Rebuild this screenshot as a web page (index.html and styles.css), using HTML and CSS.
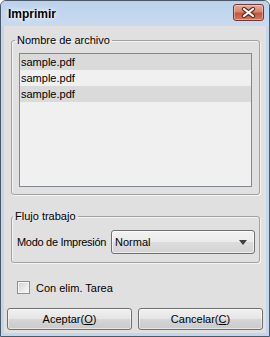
FILE: index.html
```html
<!DOCTYPE html>
<html lang="es">
<head>
    <meta charset="UTF-8">
    <title>Imprimir</title>
    <link rel="stylesheet" href="styles.css">
</head>
<body>

<div class="ventana">
    <!-- Barra de título -->
    <div class="titulo">
        <span class="titulo-texto">Imprimir</span>
        <button class="cerrar" aria-label="Cerrar">
            <svg width="15" height="11" viewBox="0 0 15 11">
                <path d="M3 2 L12 9 M12 2 L3 9" stroke="#5a2a22" stroke-width="4.2" stroke-linecap="round"/>
                <path d="M3 2 L12 9 M12 2 L3 9" stroke="#ffffff" stroke-width="2.2" stroke-linecap="round"/>
            </svg>
        </button>
    </div>

    <div class="contenido">
        <!-- Lista de archivos -->
        <fieldset class="grupo grupo-archivos">
            <legend>Nombre de archivo</legend>
            <div class="lista">
                <div class="fila oscura">sample.pdf</div>
                <div class="fila">sample.pdf</div>
                <div class="fila oscura">sample.pdf</div>
            </div>
        </fieldset>

        <!-- Flujo de trabajo -->
        <fieldset class="grupo grupo-flujo">
            <legend>Flujo trabajo</legend>
            <div class="fila-modo">
                <label for="modo" class="etiqueta-modo">Modo de Impresión</label>
                <div class="combo" id="modo">
                    <span>Normal</span>
                    <span class="flecha"></span>
                </div>
            </div>
        </fieldset>

        <label class="opcion">
            <span class="casilla"></span>
            Con elim. Tarea
        </label>

        <div class="botones">
            <button class="boton">Aceptar(<u>O</u>)</button>
            <button class="boton">Cancelar(<u>C</u>)</button>
        </div>
    </div>
</div>

</body>
</html>
```

FILE: styles.css
```css
/* Dialogo estilo Windows 7 basico */
:root {
    --marco: #c3d6ec;
    --fondo: #e0e0e0;
    --borde-grupo: #a2a2a2;
    --texto: #000000;
}

* {
    box-sizing: border-box;
}

body {
    margin: 0;
    background: #ffffff;
    font-family: 'Liberation Sans', Arial, sans-serif;
    font-size: 11px;
    color: var(--texto);
}

.ventana {
    width: 270px;
    height: 337px;
    border: 1px solid #4b5868;
    border-radius: 6px 6px 0 0;
    background: var(--marco);
    padding: 0 3px 3px 3px;
    display: flex;
    flex-direction: column;
}

.titulo {
    height: 25px;
    display: flex;
    align-items: center;
    justify-content: space-between;
    margin: 0 -3px;
    padding: 0 4px 0 7px;
    border-radius: 5px 5px 0 0;
    background: linear-gradient(#bcd2eb, #c8daef);
}

.titulo-texto {
    font-size: 12px;
    font-weight: bold;
    text-shadow: 0 0 6px #ffffff, 0 0 3px #ffffff;
}

.cerrar {
    width: 31px;
    height: 17px;
    margin-top: -3px;
    margin-right: 1px;
    padding: 0;
    border: 1px solid #6e3a35;
    border-radius: 3px;
    background: linear-gradient(#e9a999, #d88670 45%, #c7553d 55%, #d4785d);
    box-shadow: inset 0 0 0 1px rgba(255, 255, 255, 0.35);
    display: flex;
    align-items: center;
    justify-content: center;
}

.contenido {
    flex: 1;
    background: var(--fondo);
    display: flex;
    flex-direction: column;
}

.grupo {
    margin: 0 6px 0 7px;
    padding: 0 7px 7px 7px;
    min-width: 0;
    border: 1px solid var(--borde-grupo);
    border-radius: 3px;
    box-shadow: inset 1px 1px 0 #f4f4f4, 1px 1px 0 #f4f4f4;
}

.grupo legend {
    line-height: 14px;
    padding: 0 2px;
    margin-left: -4px;
}

.grupo-archivos {
    margin-top: 7px;
}

.lista {
    margin-top: 6px;
    height: 134px;
    border: 1px solid #828790;
    background: #f0f0f0;
}

.fila {
    height: 16px;
    line-height: 16px;
    padding-left: 1px;
}

.fila.oscura {
    background: #dadada;
}

.grupo-flujo {
    margin-top: 14px;
    padding: 0 4px 8px 5px;
}

.fila-modo {
    margin-top: 7px;
    display: flex;
    align-items: center;
    justify-content: space-between;
}

.etiqueta-modo {
    white-space: nowrap;
    letter-spacing: -0.3px;
}

.combo {
    flex-shrink: 0;
    width: 144px;
    height: 24px;
    border: 1px solid #707070;
    border-radius: 3px;
    background: linear-gradient(#f2f2f2, #ebebeb 50%, #dddddd 50%, #d3d3d3);
    box-shadow: inset 0 0 0 1px rgba(255, 255, 255, 0.6);
    padding: 0 7px 0 3px;
    display: flex;
    align-items: center;
    justify-content: space-between;
}

.flecha {
    width: 0;
    height: 0;
    border-left: 4px solid transparent;
    border-right: 4px solid transparent;
    border-top: 5px solid #404040;
}

.opcion {
    margin: 18px 0 0 13px;
    display: flex;
    align-items: center;
    gap: 6px;
    height: 13px;
}

.casilla {
    width: 13px;
    height: 13px;
    border: 1px solid #8e8f8f;
    background: linear-gradient(135deg, #d2d2d2, #fbfbfb);
    box-shadow: inset 0 0 0 1px #f4f4f4;
}

.botones {
    margin-top: 14px;
    padding: 0 3px;
    display: flex;
    gap: 6px;
}

.boton {
    flex: 1;
    height: 22px;
    padding: 0;
    border: 1px solid #707070;
    border-radius: 3px;
    background: linear-gradient(#f0f0f0, #e5e5e5 50%, #d6d6d6 50%, #cacaca);
    box-shadow: inset 0 0 0 1px rgba(255, 255, 255, 0.5);
    font-family: inherit;
    font-size: 11px;
    color: #000000;
}
```
